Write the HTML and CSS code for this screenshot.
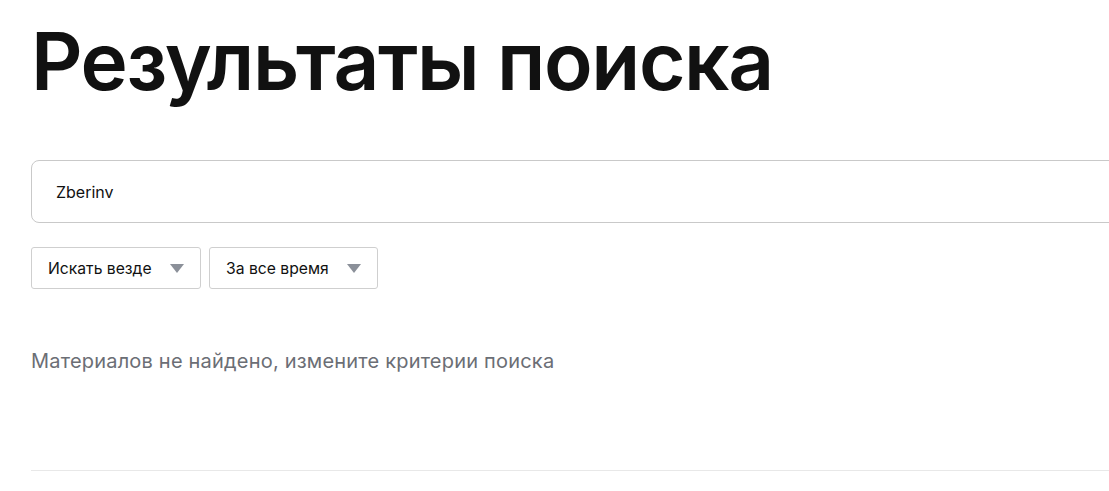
FILE: index.html
```html
<!DOCTYPE html>
<html lang="ru">

<head>
  <meta charset="utf-8">
  <link rel="stylesheet" href="styles.css">
</head>

<body>
  <div class="page">
    <h1 class="title">Результаты поиска</h1>

    <div class="search">
      <input class="search-input" type="text" value="Zberinv">
    </div>

    <div class="filters">
      <div class="select select-where">
        <span class="select-text">Искать везде</span>
        <span class="arrow"></span>
      </div>
      <div class="select select-time">
        <span class="select-text">За все время</span>
        <span class="arrow"></span>
      </div>
    </div>

    <p class="empty">Материалов не найдено, измените критерии поиска</p>

    <hr class="divider">
  </div>
</body>
</html>
```

FILE: styles.css
```css
html, body {
  margin: 0;
  padding: 0;
  overflow: hidden;
  background: #fff;
}
body {
  font-family: Inter, "Noto Sans", sans-serif;
  color: #111;
}
.page {
  width: 1240px;
  padding-left: 31px;
}
.title {
  margin: 0;
  padding-top: 13px;
  font-size: 80px;
  font-weight: 600;
  letter-spacing: -1.4px;
  line-height: 96px;
  color: #111;
}
.search {
  margin-top: 51px;
}
.search-input {
  box-sizing: border-box;
  width: 100%;
  height: 63px;
  border: 1px solid #c9c9c9;
  border-radius: 8px;
  padding: 0 24px;
  font-family: inherit;
  font-size: 16px;
  color: #111;
  outline: none;
}
.filters {
  display: flex;
  gap: 8px;
  margin-top: 24px;
}
.select {
  box-sizing: border-box;
  display: flex;
  align-items: center;
  justify-content: space-between;
  height: 42px;
  border: 1px solid #cfcfcf;
  border-radius: 3px;
  padding: 0 16px;
  font-size: 15.7px;
  color: #111;
}
.select-where {
  width: 170px;
}
.select-time {
  width: 169px;
}
.arrow {
  width: 0;
  height: 0;
  border-left: 7px solid transparent;
  border-right: 7px solid transparent;
  border-top: 9px solid #8b9099;
}
.empty {
  margin: 60px 0 0;
  font-size: 20px;
  letter-spacing: 0.2px;
  line-height: 24px;
  color: #6b6e75;
}
.divider {
  margin: 97px 0 0;
  border: 0;
  border-top: 1px solid #e8e8e8;
}
```
